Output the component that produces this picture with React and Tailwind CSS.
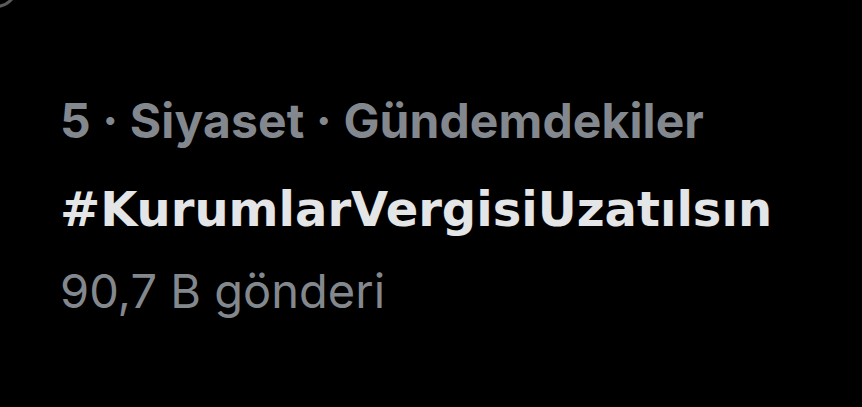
export default function App() {
  return (
    <div className="relative w-[862px] h-[407px] overflow-hidden bg-black font-['Inter',_'Noto_Sans',_sans-serif]">
      <div className="absolute -left-[26px] -top-[36px] w-[44px] h-[44px] rounded-full border-[3px] border-[#5a5b5d]" />
      <div className="flex flex-col pl-[60px] pt-[93px]">
        <div className="text-[48px] leading-[56px] font-bold text-[#83888e] tracking-[0.1px]">
          5 · Siyaset · Gündemdekiler
        </div>
        <div className="mt-[32px] font-['DejaVu_Sans',_sans-serif] text-[48px] leading-[56px] font-bold text-[#e4e5e6]">
          #KurumlarVergisiUzatılsın
        </div>
        <div className="mt-[26px] text-[47px] leading-[56px] font-normal text-[#83888e]">
          90,7 B gönderi
        </div>
      </div>
    </div>
  );
}
